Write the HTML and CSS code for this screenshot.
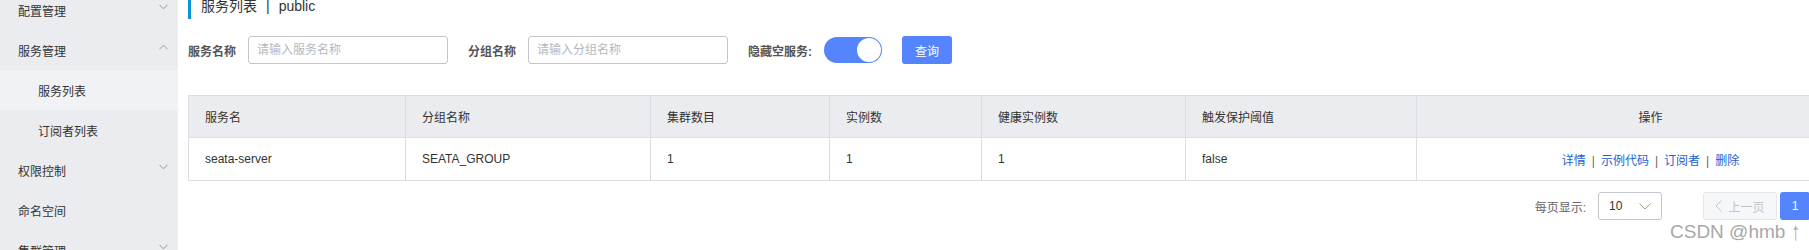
FILE: index.html
```html
<!DOCTYPE html>
<html lang="zh-CN">
<head>
    <meta charset="UTF-8">
    <title>服务列表</title>
    <link rel="stylesheet" href="styles.css">
</head>
<body>
<div class="layout">
    <div class="sidebar">
        <div class="menu-item">配置管理
            <svg class="arrow" width="9" height="6" viewBox="0 0 9 6"><polyline points="0.5,0.8 4.5,4.8 8.5,0.8"/></svg>
        </div>
        <div class="menu-item">服务管理
            <svg class="arrow" width="9" height="6" viewBox="0 0 9 6"><polyline points="0.5,5.2 4.5,1.2 8.5,5.2"/></svg>
        </div>
        <div class="menu-item sub active">服务列表</div>
        <div class="menu-item sub">订阅者列表</div>
        <div class="menu-item">权限控制
            <svg class="arrow" width="9" height="6" viewBox="0 0 9 6"><polyline points="0.5,0.8 4.5,4.8 8.5,0.8"/></svg>
        </div>
        <div class="menu-item">命名空间</div>
        <div class="menu-item">集群管理
            <svg class="arrow" width="9" height="6" viewBox="0 0 9 6"><polyline points="0.5,0.8 4.5,4.8 8.5,0.8"/></svg>
        </div>
    </div>

    <div class="main">
        <div class="page-title">服务列表<span class="title-sep">|</span>public</div>

        <div class="search">
            <label class="field-label">服务名称</label>
            <input class="field-input" type="text" placeholder="请输入服务名称">
            <label class="field-label">分组名称</label>
            <input class="field-input" type="text" placeholder="请输入分组名称">
            <label class="field-label">隐藏空服务:</label>
            <span class="switch"><span class="knob"></span></span>
            <button class="btn-primary">查询</button>
        </div>

        <table class="grid">
            <colgroup>
                <col class="col-name">
                <col class="col-group">
                <col class="col-cluster">
                <col class="col-count">
                <col class="col-healthy">
                <col class="col-threshold">
                <col>
            </colgroup>
            <thead>
                <tr>
                    <th>服务名</th>
                    <th>分组名称</th>
                    <th>集群数目</th>
                    <th>实例数</th>
                    <th>健康实例数</th>
                    <th>触发保护阈值</th>
                    <th class="center">操作</th>
                </tr>
            </thead>
            <tbody>
                <tr>
                    <td>seata-server</td>
                    <td>SEATA_GROUP</td>
                    <td>1</td>
                    <td>1</td>
                    <td>1</td>
                    <td>false</td>
                    <td class="center">
                        <a href="#">详情</a><span class="sep">|</span><a href="#">示例代码</a><span class="sep">|</span><a href="#">订阅者</a><span class="sep">|</span><a href="#">删除</a>
                    </td>
                </tr>
            </tbody>
        </table>

        <div class="pagination">
            <span class="page-size-label">每页显示:</span>
            <div class="page-size">
                <span>10</span>
                <svg width="12" height="7" viewBox="0 0 12 7"><polyline points="0.5,0.5 6,6 11.5,0.5"/></svg>
            </div>
            <div class="pager">
                <button class="page-btn prev" disabled>
                    <svg width="7" height="12" viewBox="0 0 7 12"><polyline points="6.5,0.5 1,6 6.5,11.5"/></svg>上一页
                </button>
                <button class="page-btn current">1</button>
                <button class="page-btn next" disabled>下一页
                    <svg width="7" height="12" viewBox="0 0 7 12"><polyline points="0.5,0.5 6,6 0.5,11.5"/></svg>
                </button>
            </div>
        </div>
    </div>
</div>
<div class="watermark">CSDN @hmb <span class="wm-arrow">↑</span></div>
</body>
</html>
```

FILE: styles.css
```css
body {
    margin: 0;
    width: 1809px;
    height: 250px;
    overflow: hidden;
    position: relative;
    background: #fff;
    font-family: "Liberation Sans", "Noto Sans CJK SC", sans-serif;
    font-size: 12px;
    color: #333;
}
.layout {
    display: flex;
    align-items: flex-start;
    height: 250px;
    overflow: hidden;
}
.sidebar {
    width: 178px;
    height: 260px;
    flex-shrink: 0;
    margin-top: -10px;
    background: #eaecf0;
    overflow: hidden;
}
.menu-item {
    height: 40px;
    display: flex;
    align-items: center;
    justify-content: space-between;
    padding: 0 10px 0 18px;
    font-size: 12px;
    color: #333;
}
.menu-item.sub {
    padding-left: 38px;
}
.menu-item.active {
    background: #f1f2f5;
}
.arrow {
    margin-bottom: 6px;
}
.arrow polyline {
    fill: none;
    stroke: #999;
    stroke-width: 1;
}
.main {
    width: 1697px;
    flex-shrink: 0;
    padding-left: 10px;
}
.page-title {
    height: 26px;
    line-height: 26px;
    margin-top: -7px;
    padding-left: 10px;
    border-left: 3px solid #0a96d6;
    font-size: 14px;
    color: #333;
}
.title-sep {
    margin: 0 9px;
}
.search {
    display: flex;
    align-items: center;
    height: 28px;
    margin-top: 17px;
}
.field-label {
    font-weight: bold;
    color: #555;
    margin-right: 12px;
}
.field-input {
    width: 200px;
    height: 28px;
    box-sizing: border-box;
    padding: 0 8px;
    border: 1px solid #c4c6cf;
    border-radius: 3px;
    font-family: inherit;
    font-size: 12px;
    margin-right: 20px;
    outline: none;
}
.field-input::placeholder {
    color: #b5b8be;
}
.switch {
    position: relative;
    width: 58px;
    height: 26px;
    border-radius: 13px;
    background: #5584ff;
    margin-right: 20px;
}
.knob {
    position: absolute;
    right: 1px;
    top: 1px;
    width: 24px;
    height: 24px;
    border-radius: 50%;
    background: #fff;
}
.btn-primary {
    width: 50px;
    height: 28px;
    border: none;
    border-radius: 3px;
    background: #5584ff;
    color: #fff;
    font-family: inherit;
    font-size: 12px;
    padding: 0;
}
.grid {
    width: 100%;
    margin-top: 31px;
    border-collapse: collapse;
    table-layout: fixed;
    border: 1px solid #dcdee3;
}
.col-name { width: 217px; }
.col-group { width: 245px; }
.col-cluster { width: 179px; }
.col-count { width: 152px; }
.col-healthy { width: 204px; }
.col-threshold { width: 231px; }
.grid th, .grid td {
    text-align: left;
    padding: 0 16px;
    font-weight: normal;
    color: #333;
    border: 1px solid #dcdee3;
}
.grid th {
    height: 41px;
    background: #ebecf0;
}
.grid td {
    height: 42px;
}
.grid .center {
    text-align: center;
}
.grid a {
    color: #1b63d4;
    text-decoration: none;
}
.sep {
    color: #666;
    margin: 0 6px;
}
.pagination {
    display: flex;
    justify-content: flex-end;
    align-items: center;
    margin-top: 11px;
    margin-right: -2px;
}
.page-size-label {
    color: #666;
    margin-right: 12px;
}
.page-size {
    width: 64px;
    height: 28px;
    box-sizing: border-box;
    border: 1px solid #c4c6cf;
    border-radius: 3px;
    display: flex;
    align-items: center;
    justify-content: space-between;
    padding: 0 10px;
    color: #333;
}
.page-size polyline, .page-btn polyline {
    fill: none;
    stroke: #999;
    stroke-width: 1;
}
.pager {
    display: flex;
    margin-left: 41px;
}
.page-btn {
    height: 28px;
    border-radius: 3px;
    font-family: inherit;
    font-size: 12px;
    padding: 0;
    display: flex;
    align-items: center;
    justify-content: center;
    gap: 6px;
}
.page-btn.prev, .page-btn.next {
    width: 74px;
    border: 1px solid #e6e7eb;
    background: #f6f7f9;
    color: #c1c4cb;
}
.page-btn.prev polyline, .page-btn.next polyline {
    stroke: #c1c4cb;
}
.page-btn.current {
    width: 30px;
    margin: 0 3px;
    border: none;
    background: #5584ff;
    color: #fff;
}
.watermark {
    position: absolute;
    left: 1670px;
    top: 220px;
    font-family: "Liberation Sans", sans-serif;
    font-size: 19px;
    line-height: 24px;
    color: #a8a8a8;
}
.wm-arrow {
    display: inline-block;
    transform: scaleY(1.3);
}
```
